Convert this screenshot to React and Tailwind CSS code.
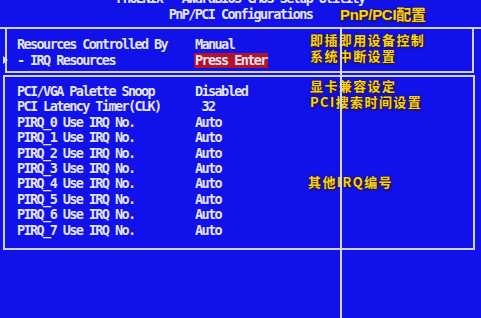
import React from 'react';

const box1 = [
  { label: 'Resources Controlled By', value: 'Manual' },
  { label: '- IRQ Resources', value: 'Press Enter', hot: true, arrow: true },
];

const box2 = [
  { label: 'PCI/VGA Palette Snoop', value: 'Disabled' },
  { label: 'PCI Latency Timer(CLK)', value: ' 32' },
  ...[0, 1, 2, 3, 4, 5, 6, 7].map((n) => ({ label: `PIRQ_${n} Use IRQ No.`, value: 'Auto' })),
];

// 黄色注释文字
function Note({ children, className = '' }) {
  return (
    <div
      className={`font-['Noto_Sans_CJK_SC','Noto_Sans',sans-serif] font-bold text-[13px] leading-[16px] tracking-[1.4px] text-[#f6d31c] [text-shadow:0_0_3px_#3a1a00,1px_1px_2px_#3a1a00] ${className}`}
    >
      {children}
    </div>
  );
}

function Row({ row, h }) {
  return (
    <div className={`relative flex whitespace-pre ${h}`}>
      {row.arrow && (
        <span className="absolute left-[-14px] top-1/2 -translate-y-1/2 w-0 h-0 border-y-[4px] border-y-transparent border-l-[5px] border-l-[#dfe0ee]" />
      )}
      <span className="w-[178px] shrink-0">{row.label}</span>
      <span className={row.hot ? 'bg-[#b3132a] px-[1px] -ml-[1px] h-[15px] leading-[15px] self-center' : ''}>{row.value}</span>
    </div>
  );
}

export default function App() {
  return (
    <div className="relative w-[481px] h-[318px] overflow-hidden bg-[#1111ea] text-[#e4e4f2] font-['DejaVu_Sans_Mono','Liberation_Mono',monospace] font-bold text-[13.5px] tracking-[-1.6px]">
      {/* 标题 */}
      <div className="h-[29px] border-b-2 border-[#cfd2e0] relative flex flex-col">
        <div className="text-center leading-[14px] -mt-[9px] mb-[1px] whitespace-pre">PHOENIX - AwardBIOS CMOS Setup Utility</div>
        <div className="flex items-center h-[16px]">
          <div className="w-[483px] text-center whitespace-pre">PnP/PCI Configurations</div>
        </div>
        <div className="absolute left-[340px] top-[4px] font-['Liberation_Sans','Noto_Sans_CJK_SC',sans-serif] font-bold text-[15px] tracking-[-0.3px] text-[#f6d31c] [text-shadow:0_0_3px_#3a1a00,1px_1px_2px_#3a1a00]">
          PnP/PCI配置
        </div>
      </div>

      {/* 第一组 */}
      <div className="ml-[5px] w-[469px] h-[44px] border-x-2 border-b-2 border-[#cfd2e0] flex">
        <div className="w-[303px] pl-[10px] pt-[7px]">
          {box1.map((r) => <Row key={r.label} row={r} h="h-[16px] leading-[16px]" />)}
        </div>
        <div className="pt-[3px]">
          <Note>即插即用设备控制</Note>
          <Note>系统中断设置</Note>
        </div>
      </div>

      {/* 第二组 */}
      <div className="mt-[2px] ml-[3px] w-[472px] h-[175px] border-2 border-[#cfd2e0] flex">
        <div className="w-[305px] pl-[12px] pt-[7px]">
          {box2.map((r) => <Row key={r.label} row={r} h="h-[15.4px] leading-[15.4px]" />)}
        </div>
        <div className="pt-[1px] flex flex-col">
          <Note>显卡兼容设定</Note>
          <Note className="font-['Liberation_Sans','Noto_Sans_CJK_SC',sans-serif] tracking-[0.4px]">PCI搜索时间设置</Note>
          <Note className="mt-[64px] -ml-[2px] font-['Liberation_Sans','Noto_Sans_CJK_SC',sans-serif] tracking-[0.4px]">其他IRQ编号</Note>
        </div>
      </div>

      {/* 分隔竖线 */}
      <div className="absolute left-[340px] top-[27px] bottom-0 w-[2px] bg-[#d6d8e4]" />
    </div>
  );
}
